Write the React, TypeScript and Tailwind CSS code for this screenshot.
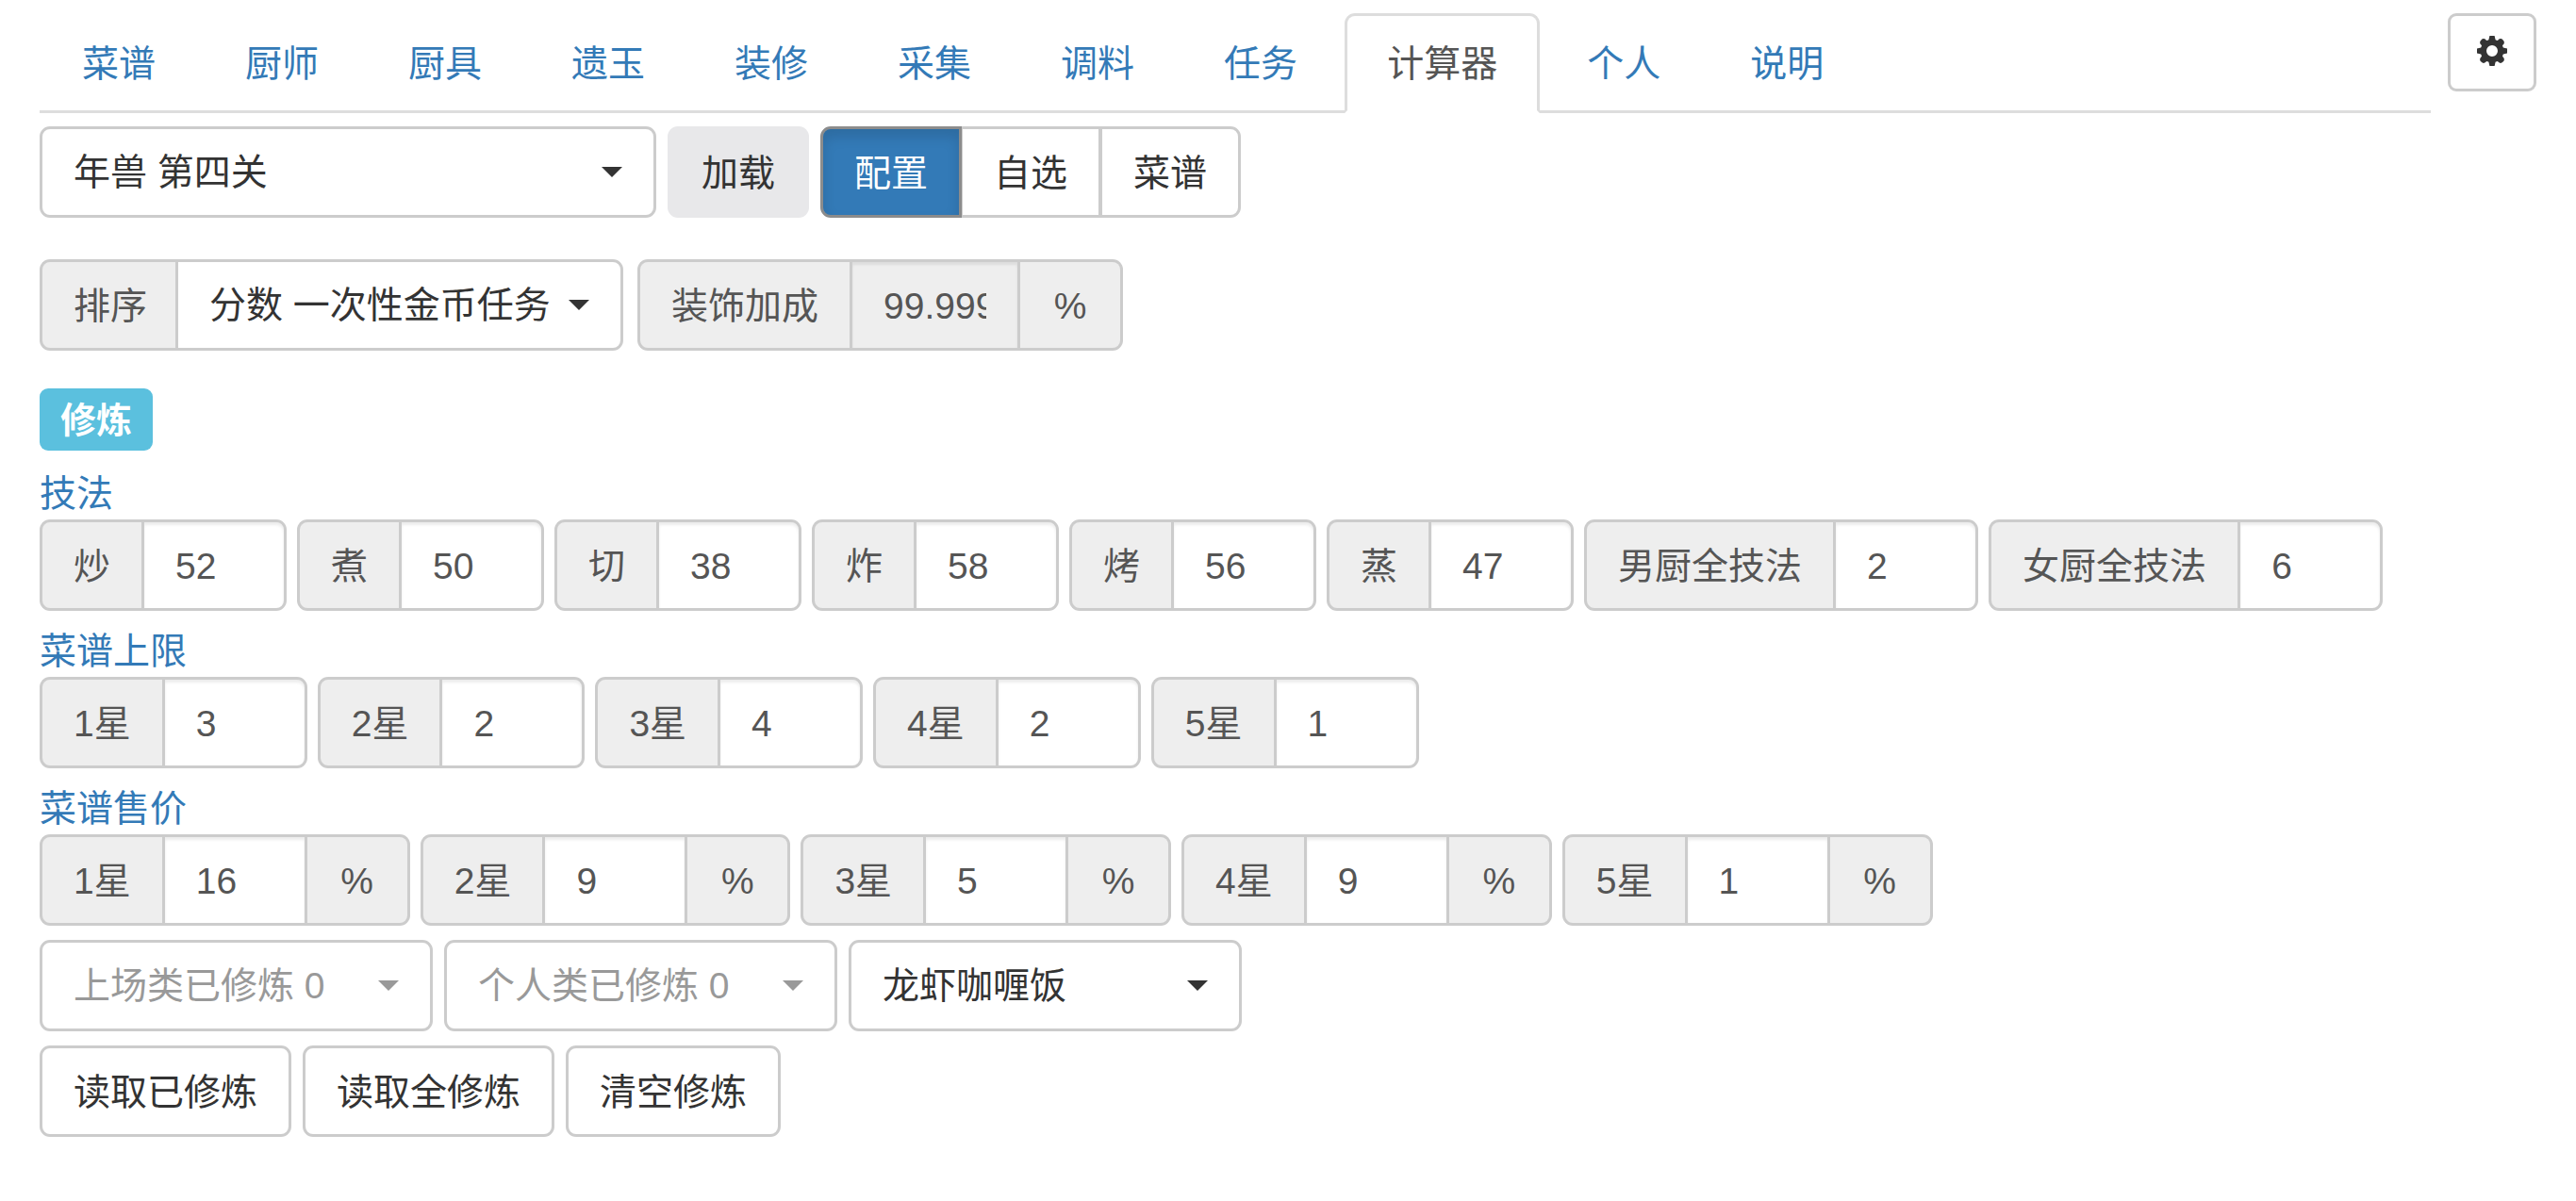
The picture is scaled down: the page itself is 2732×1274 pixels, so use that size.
import React, { useState } from 'react';
import clsx from 'clsx';

const tabs = ['菜谱', '厨师', '厨具', '遗玉', '装修', '采集', '调料', '任务', '计算器', '个人', '说明'];

const skills = [
  { label: '炒', value: '52' },
  { label: '煮', value: '50' },
  { label: '切', value: '38' },
  { label: '炸', value: '58' },
  { label: '烤', value: '56' },
  { label: '蒸', value: '47' },
  { label: '男厨全技法', value: '2' },
  { label: '女厨全技法', value: '6' },
];

const limits = [
  { label: '1星', value: '3' },
  { label: '2星', value: '2' },
  { label: '3星', value: '4' },
  { label: '4星', value: '2' },
  { label: '5星', value: '1' },
];

const prices = [
  { label: '1星', value: '16' },
  { label: '2星', value: '9' },
  { label: '3星', value: '5' },
  { label: '4星', value: '9' },
  { label: '5星', value: '1' },
];

const btn = 'h-[97px] px-[33px] pt-[3px] border-[3px] whitespace-nowrap cursor-pointer';
const addon = 'h-[97px] pt-[3px] flex items-center justify-center border-[3px] border-[#ccc] bg-[#eee] text-[#555] whitespace-nowrap';

const GearIcon = () => (
  <svg viewBox="0 0 32 32" className="w-8 h-8" fill="currentColor" aria-hidden="true">
    <path
      fillRule="evenodd"
      d="M13.4 0H18.6L19.6 4.2L21.4 5L22.4 4.4A3.2 3.2 0 1 1 27.6 9.6L27 10.6L27.8 12.4L32 13.4V18.6L27.8 19.6L27 21.4L27.6 22.4A3.2 3.2 0 1 1 22.4 27.6L21.4 27L19.6 27.8L18.6 32H13.4L12.4 27.8L10.6 27L9.6 27.6A3.2 3.2 0 1 1 4.4 22.4L5 21.4L4.2 19.6L0 18.6V13.4L4.2 12.4L5 10.6L4.4 9.6A3.2 3.2 0 1 1 9.6 4.4L10.6 5L12.4 4.2ZM16 10a6 6 0 1 0 0 12a6 6 0 1 0 0-12z"
    />
  </svg>
);

type DropdownProps = { id?: string, label?: string, text: string, disabled?: boolean, className?: string, selectClassName?: string };

const Dropdown = ({ id, label, text, disabled, className, selectClassName }: DropdownProps) => (
  <div className={clsx('relative', disabled ? 'text-[#999]' : 'text-[#333]', className)}>
    <select
      id={id}
      aria-label={label}
      disabled={disabled}
      className={clsx('appearance-none w-full h-[97px] pt-[2px] pl-[33px] pr-[72px] border-[3px] border-[#ccc] bg-white opacity-100', selectClassName ?? 'rounded-[11px]')}
    >
      <option>{text}</option>
    </select>
    <svg viewBox="0 0 22 11" className="absolute right-9 top-[43px] w-[22px] h-[11px] pointer-events-none" fill="currentColor" aria-hidden="true">
      <path d="M0 0h22L11 11z" />
    </svg>
  </div>
);

type FieldProps = { id: string, label: string, value: string, suffix?: string, disabled?: boolean, inputClassName?: string };

const Field = ({ id, label, value, suffix, disabled, inputClassName = 'w-[154px]' }: FieldProps) => {
  const [current, setCurrent] = useState(value);

  return (
    <div className="flex">
      <label htmlFor={id} className={clsx(addon, 'px-[33px] border-r-0 rounded-l-[11px]')}>{label}</label>
      <input
        id={id}
        type="text"
        value={current}
        disabled={disabled}
        onChange={e => setCurrent(e.target.value)}
        className={clsx(
          'h-[97px] px-[33px] pt-[2px] border-[3px] border-[#ccc] text-[#555] outline-none shadow-[inset_0_3px_3px_rgba(0,0,0,0.075)]',
          disabled ? 'bg-[#eee]' : 'bg-white',
          !suffix && 'rounded-r-[11px]',
          inputClassName
        )}
      />
      {suffix && <span className={clsx(addon, 'w-[109px] border-l-0 rounded-r-[11px]')}>{suffix}</span>}
    </div>
  );
};

const SectionTitle = ({ children }: { children: React.ReactNode }) => (
  <h3 className="pt-[2px] leading-[54px]"><a href="#" className="text-[#337ab7]">{children}</a></h3>
);

export default function App() {
  const [activeTab, setActiveTab] = useState('计算器');
  const [mode, setMode] = useState('配置');

  return (
    <div className="min-h-screen bg-white px-[42px] pt-[14px] pb-14 text-[39px] text-[#333] font-['Liberation_Sans','Noto_Sans_CJK_SC',sans-serif]">
      <header className="flex items-start gap-[18px]">
        <nav className="grow flex gap-[5px] border-b-[3px] border-[#ddd]">
          {tabs.map(tab => (
            <a
              key={tab}
              href="#"
              onClick={() => setActiveTab(tab)}
              className={clsx(
                'h-[106px] -mb-[3px] px-[42px] pt-[3px] flex items-center border-[3px] rounded-t-[11px] whitespace-nowrap',
                tab === activeTab ? 'border-[#ddd] border-b-white bg-white text-[#555]' : 'border-transparent text-[#337ab7]'
              )}
            >
              {tab}
            </a>
          ))}
        </nav>
        <button type="button" aria-label="设置" className="w-[94px] h-[83px] pb-1 flex items-center justify-center border-[3px] border-[#ccc] rounded-[9px] bg-white cursor-pointer">
          <GearIcon />
        </button>
      </header>

      <main>
        <div className="flex flex-wrap gap-3 mt-[14px]">
          <Dropdown label="规则" text="年兽 第四关" className="w-[654px]" />
          <button type="button" className="h-[97px] px-9 pt-[3px] rounded-[11px] bg-[#e8e8ea] cursor-pointer">加载</button>
          <div className="flex">
            {['配置', '自选', '菜谱'].map(name => (
              <button
                key={name}
                type="button"
                onClick={() => setMode(name)}
                className={clsx(
                  btn,
                  'not-first:-ml-[2px] first:rounded-l-[11px] last:rounded-r-[11px]',
                  name === mode
                    ? 'relative bg-[#337ab7] text-white border-[#8c8c8c] shadow-[inset_0_8px_14px_rgba(0,0,0,0.125)]'
                    : 'bg-white border-[#ccc]'
                )}
              >
                {name}
              </button>
            ))}
          </div>
        </div>

        <div className="flex flex-wrap gap-[15px] mt-11">
          <div className="flex">
            <label htmlFor="sort" className={clsx(addon, 'px-[33px] border-r-0 rounded-l-[11px]')}>排序</label>
            <Dropdown id="sort" text="分数 一次性金币任务" className="w-[475px] -ml-[3px]" selectClassName="rounded-r-[11px]" />
          </div>
          <Field id="decoration" label="装饰加成" value="99.999" suffix="%" disabled inputClassName="w-[181px]" />
        </div>

        <h2 className="mt-10 mb-[17px] flex">
          <span className="h-[66px] px-[22px] pt-[2px] flex items-center rounded-[9px] bg-[#5bc0de] text-white text-[38px] font-bold">修炼</span>
        </h2>

        <section>
          <SectionTitle>技法</SectionTitle>
          <div className="flex flex-wrap gap-[11px]">
            {skills.map((s, i) => <Field key={s.label} id={`skill-${i}`} label={s.label} value={s.value} />)}
          </div>
        </section>

        <section className="mt-[14px]">
          <SectionTitle>菜谱上限</SectionTitle>
          <div className="flex flex-wrap gap-[11px]">
            {limits.map((s, i) => <Field key={s.label} id={`limit-${i}`} label={s.label} value={s.value} />)}
          </div>
        </section>

        <section className="mt-[14px]">
          <SectionTitle>菜谱售价</SectionTitle>
          <div className="flex flex-wrap gap-[11px]">
            {prices.map((s, i) => <Field key={s.label} id={`price-${i}`} label={s.label} value={s.value} suffix="%" />)}
          </div>
        </section>

        <div className="flex flex-wrap gap-3 mt-[15px]">
          <Dropdown label="上场类" text="上场类已修炼 0" disabled className="w-[417px]" />
          <Dropdown label="个人类" text="个人类已修炼 0" disabled className="w-[417px]" />
          <Dropdown label="菜谱" text="龙虾咖喱饭" className="w-[417px]" />
        </div>

        <div className="flex flex-wrap gap-3 mt-[15px]">
          {['读取已修炼', '读取全修炼', '清空修炼'].map(name => (
            <button key={name} type="button" className={clsx(btn, 'rounded-[11px] border-[#ccc] bg-white')}>{name}</button>
          ))}
        </div>
      </main>
    </div>
  );
}
